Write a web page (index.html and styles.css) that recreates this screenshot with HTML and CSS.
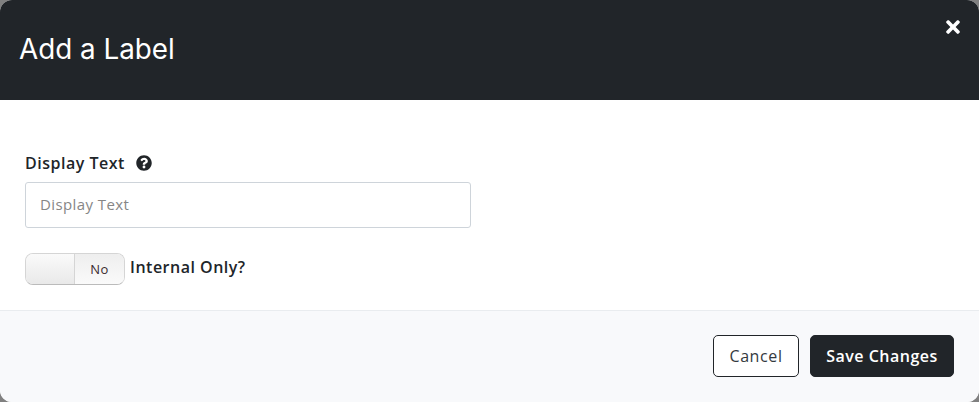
FILE: index.html
```html
<!DOCTYPE html>
<html lang="en">
<head>
    <meta charset="UTF-8">
    <title>Add a Label</title>
    <link rel="stylesheet" href="styles.css">
</head>
<body>

    <div class="modal">
        <!-- Header -->
        <div class="modal-header">
            <h1>Add a Label</h1>
            <svg class="close" viewBox="0 0 352 512"><path d="M242.72 256l100.07-100.07c12.28-12.28 12.28-32.19 0-44.48l-22.24-22.24c-12.28-12.28-32.19-12.28-44.48 0L176 189.28 75.93 89.21c-12.28-12.28-32.19-12.28-44.48 0L9.21 111.45c-12.28 12.28-12.28 32.19 0 44.48L109.28 256 9.21 356.07c-12.28 12.28-12.28 32.19 0 44.48l22.24 22.24c12.28 12.28 32.2 12.28 44.48 0L176 322.72l100.07 100.07c12.28 12.28 32.2 12.28 44.48 0l22.24-22.24c12.28-12.28 12.28-32.19 0-44.48L242.72 256z"/></svg>
        </div>

        <!-- Form -->
        <div class="modal-body">
            <label class="field-label">
                Display Text
                <svg class="help" viewBox="0 0 512 512"><path d="M504 256c0 136.997-111.043 248-248 248S8 392.997 8 256C8 119.083 119.043 8 256 8s248 111.083 248 248zM262.655 90c-54.497 0-89.255 22.957-116.549 63.758-3.536 5.286-2.353 12.415 2.715 16.258l34.699 26.31c5.205 3.947 12.621 3.008 16.665-2.122 17.864-22.658 30.113-35.797 57.303-35.797 20.429 0 45.698 13.148 45.698 32.958 0 14.976-12.363 22.667-32.534 33.976C247.128 238.528 216 254.941 216 296v4c0 6.627 5.373 12 12 12h56c6.627 0 12-5.373 12-12v-1.333c0-28.462 83.186-29.647 83.186-106.667 0-58.002-60.165-102-116.531-102zM256 338c-25.365 0-46 20.635-46 46 0 25.364 20.635 46 46 46s46-20.636 46-46c0-25.365-20.635-46-46-46z"/></svg>
            </label>
            <input class="text-input" type="text" placeholder="Display Text">

            <div class="toggle-row">
                <div class="toggle">
                    <span class="toggle-handle"></span>
                    <span class="toggle-off">No</span>
                </div>
                <span class="toggle-label">Internal Only?</span>
            </div>
        </div>

        <!-- Footer -->
        <div class="modal-footer">
            <button class="btn btn-cancel">Cancel</button>
            <button class="btn btn-save">Save Changes</button>
        </div>
    </div>

</body>
</html>
```

FILE: styles.css
```css
html, body {
    height: 100%;
}

body {
    margin: 0;
    background-color: #808080;
    font-family: "Open Sans", Arial, sans-serif;
    color: #212529;
}

.modal {
    height: 402px;
    display: flex;
    flex-direction: column;
    background-color: #fff;
    border-radius: 12px;
    overflow: hidden;
}

.modal-header {
    position: relative;
    height: 100px;
    flex: none;
    display: flex;
    align-items: center;
    padding: 0 0 2px 19px;
    box-sizing: border-box;
    background-color: #212529;
    color: #fff;
}

.modal-header h1 {
    margin: 0;
    font-family: Inter, Arial, sans-serif;
    font-size: 27.8px;
    font-weight: 400;
}

.close {
    position: absolute;
    top: 17px;
    right: 19px;
    width: 14px;
    height: 20px;
    fill: #fff;
}

.modal-body {
    flex: 1;
    padding: 52px 25px 0;
}

.field-label {
    display: flex;
    align-items: center;
    gap: 11px;
    height: 22px;
    font-size: 16px;
    font-weight: 600;
    letter-spacing: 0.5px;
}

.help {
    width: 16px;
    height: 16px;
    fill: #212529;
}

.text-input {
    display: block;
    box-sizing: border-box;
    width: 446px;
    height: 46px;
    margin-top: 8px;
    padding: 0 14px 2px;
    border: 1px solid #ced4da;
    border-radius: 3px;
    font-family: "Open Sans", Arial, sans-serif;
    font-size: 15px;
    letter-spacing: 0.4px;
}

.text-input::placeholder {
    color: #868686;
}

.toggle-row {
    display: flex;
    align-items: center;
    gap: 5px;
    margin-top: 25px;
}

.toggle {
    box-sizing: border-box;
    display: flex;
    width: 100px;
    height: 32px;
    border-radius: 8px;
    border: 1px solid #d5d5d5;
    border-bottom-color: #bbb;
    overflow: hidden;
}

.toggle-handle {
    width: 48px;
    border-right: 1px solid #d5d5d5;
    background: linear-gradient(#fafafa, #e9e9e9);
}

.toggle-off {
    flex: 1;
    text-align: center;
    line-height: 31px;
    font-size: 13px;
    letter-spacing: 0.5px;
    color: #3a2a2e;
    background: linear-gradient(#eeeeee, #fafafa);
}

.toggle-label {
    padding-bottom: 4px;
    font-size: 16px;
    font-weight: 600;
    letter-spacing: 0.5px;
}

.modal-footer {
    flex: none;
    box-sizing: border-box;
    height: 92px;
    display: flex;
    justify-content: flex-end;
    align-items: flex-start;
    gap: 11px;
    padding: 24px 25px 0;
    border-top: 1px solid #e9ecef;
    background-color: #f8f9fb;
}

.btn {
    height: 42px;
    padding: 0;
    border-radius: 5px;
    font-family: "Open Sans", Arial, sans-serif;
    font-size: 16px;
    cursor: pointer;
}

.btn-cancel {
    width: 86px;
    background-color: #fff;
    border: 1px solid #212529;
    color: #343a40;
    letter-spacing: 0.6px;
}

.btn-save {
    width: 144px;
    background-color: #212529;
    border: 1px solid #212529;
    color: #fff;
    font-weight: 600;
    letter-spacing: 0.5px;
}
```
